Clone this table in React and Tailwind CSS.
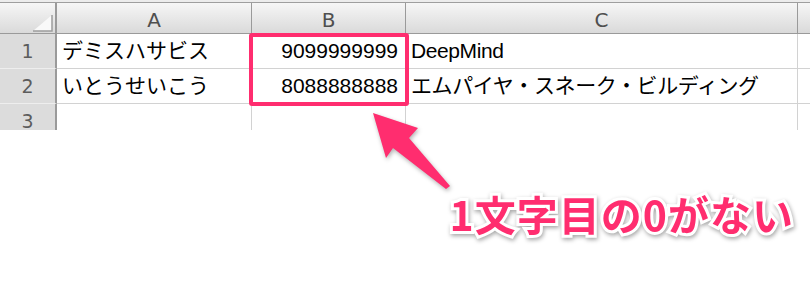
import React from 'react';

const rows = [
  { n: '1', a: 'デミスハサビス', b: '9099999999', c: 'DeepMind' },
  { n: '2', a: 'いとうせいこう', b: '8088888888', c: 'エムパイヤ・スネーク・ビルディング' },
];

const cols = [
  { key: 'A', w: 'w-[195px]' },
  { key: 'B', w: 'w-[154px]' },
  { key: 'C', w: 'w-[392px]' },
];

const HeaderRow = () => (
  <div className="flex h-[31px] border-b border-[#9a9a9a] bg-linear-to-b from-[#f6f6f6] to-[#dadada]">
    <div className="relative w-[57px] border-r-2 border-[#9a9a9a]">
      <svg className="absolute left-[33px] top-[12px]" width="20" height="17" viewBox="0 0 20 17">
        <polygon points="19,0 19,16 0,16" fill="#f9f9f9" />
        <polyline points="19,0 19,16 0,16" fill="none" stroke="#9c9c9c" strokeWidth="1.5" />
      </svg>
    </div>
    {cols.map((col) => (
      <div
        key={col.key}
        className={`${col.w} flex items-center justify-center border-r border-[#9a9a9a] pt-[4px] font-['DejaVu_Sans',sans-serif] text-[20px] text-[#4f4f4f]`}
      >
        {col.key}
      </div>
    ))}
    <div className="flex-1" />
  </div>
);

const RowHead = ({ n, last }) => (
  <div
    className={`flex w-[57px] items-center justify-center border-r-2 border-[#9a9a9a] bg-[#dcdcdc] font-['DejaVu_Sans',sans-serif] text-[19px] text-[#5c5c5c] ${
      last ? 'items-start pt-[3px]' : 'border-b border-b-[#eeeeee]'
    }`}
  >
    {n}
  </div>
);

const App = () => {
  return (
    <div className="relative h-[292px] w-[810px] overflow-hidden bg-white font-['Liberation_Sans','Noto_Sans_CJK_JP',sans-serif] text-black">
      <div className="h-[2px] bg-[#ececec]" />
      <div className="h-px bg-[#9e9e9e]" />
      <HeaderRow />

      {rows.map((r) => (
        <div key={r.n} className="flex h-[35px]">
          <RowHead n={r.n} />
          <div className="flex w-[195px] items-center border-r border-b border-[#d2d2d2] pl-[5px] text-[21px]">
            {r.a}
          </div>
          <div className="flex w-[154px] items-center justify-end border-r border-b border-[#d2d2d2] pr-[7px] text-[21px]">
            {r.b}
          </div>
          <div className="flex w-[392px] items-center border-r border-b border-[#d2d2d2] pl-[5px] text-[21px] tracking-[-0.4px] whitespace-nowrap">
            {r.c}
          </div>
          <div className="flex-1 border-b border-[#d2d2d2]" />
        </div>
      ))}

      <div className="flex h-[26px]">
        <RowHead n="3" last />
        <div className="w-[195px] border-r border-[#d2d2d2]" />
        <div className="w-[154px] border-r border-[#d2d2d2]" />
        <div className="w-[392px] border-r border-[#d2d2d2]" />
        <div className="flex-1" />
      </div>

      <div className="flex justify-end pt-[63px] pr-[16px]">
        <div className="font-['Noto_Sans_CJK_JP',sans-serif] text-[41px] leading-none font-bold tracking-[1px] text-[#ff2d6f] [paint-order:stroke_fill] [-webkit-text-stroke:6px_#ffffff] drop-shadow-[1px_2px_2px_rgba(0,0,0,0.35)]">
          1文字目の0がない
        </div>
      </div>

      {/* selection highlight over B1:B2 */}
      <div className="absolute left-[249px] top-[33px] h-[73px] w-[160px] rounded-[3px] border-4 border-[#ff2d6f]" />

      {/* annotation arrow */}
      <svg className="absolute left-0 top-0 drop-shadow-[1px_2px_2px_rgba(0,0,0,0.3)]" width="810" height="292" viewBox="0 0 810 292">
        <polygon
          points="373,113 418,128 409,138 450,186 446,189 393,148 386,158"
          fill="#ff2d6f"
        />
      </svg>
    </div>
  );
};

export default App;
